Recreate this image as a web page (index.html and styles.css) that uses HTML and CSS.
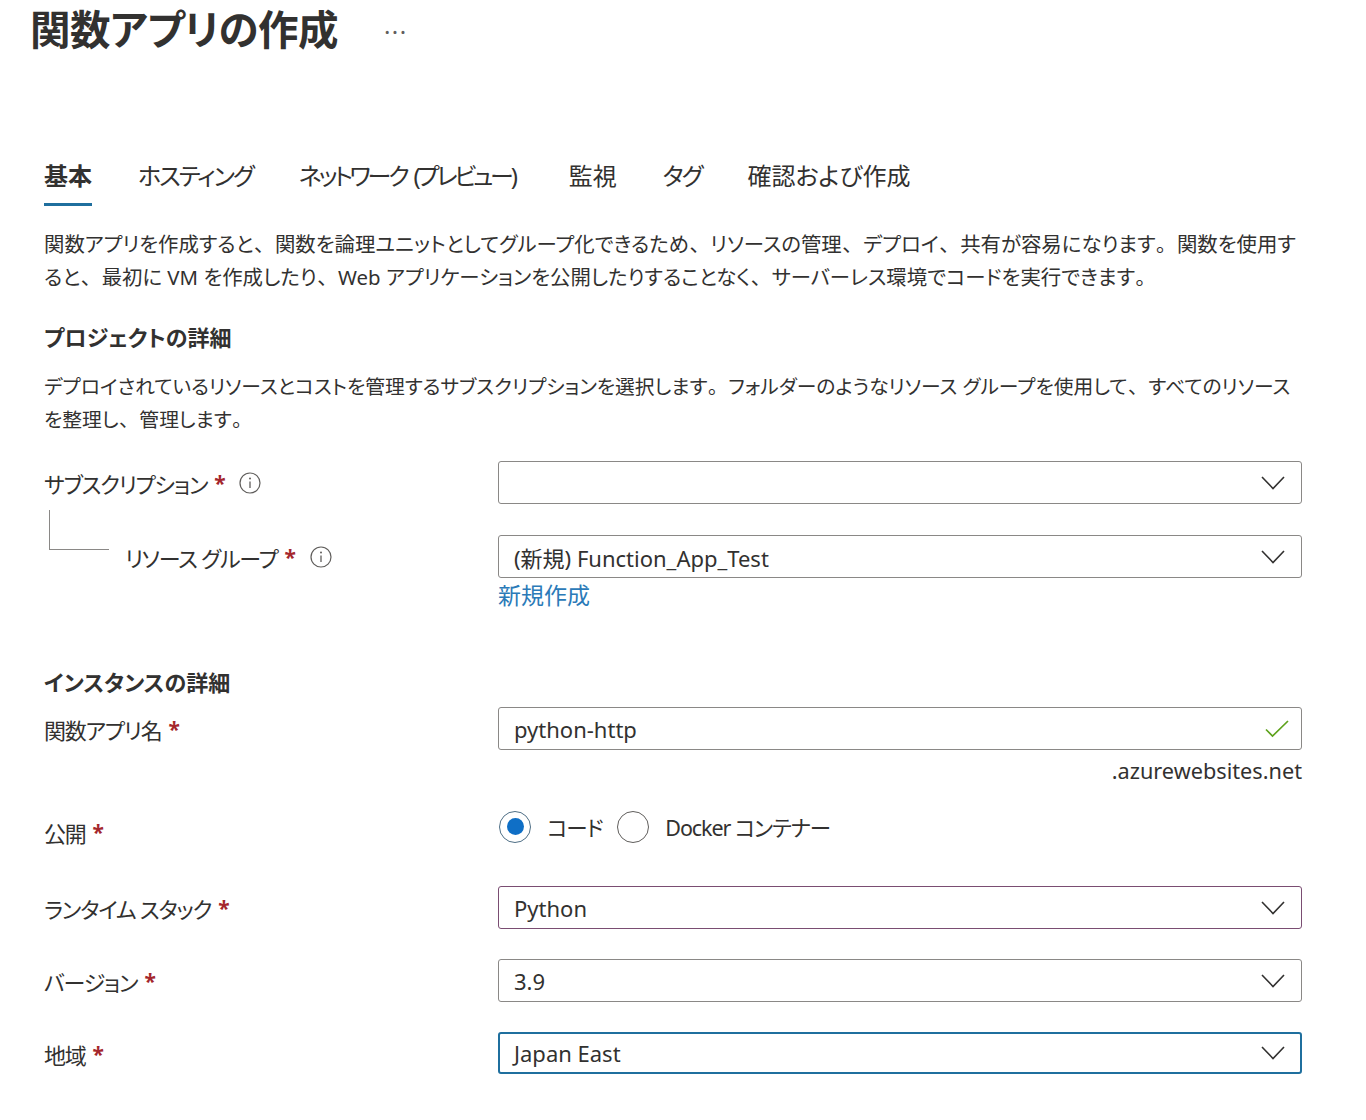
FILE: index.html
```html
<!DOCTYPE html>
<html lang="ja">
<head>
<meta charset="utf-8">
<title>関数アプリの作成</title>
<link rel="stylesheet" href="styles.css">
</head>
<body>
<header class="page-header">
  <h1 class="page-title">関数アプリの作成</h1>
  <span class="more">···</span>
</header>

<main class="content">
  <nav class="tabs">
    <span class="tab active">基本</span>
    <span class="tab tab-kana">ホスティング</span>
    <span class="tab tab-kana tab-long">ネットワーク (プレビュー)</span>
    <span class="tab tab-after-long">監視</span>
    <span class="tab tab-kana">タグ</span>
    <span class="tab">確認および作成</span>
  </nav>

  <p class="intro"><span class="seg">関数アプリを作成すると<span class="fw">、</span>関数を論理ユニットとしてグループ化できるため<span class="fw">、</span>リソースの管理<span class="fw">、</span>デプロイ<span class="fw">、</span>共有が容易になります<span class="fw">。</span>関数を使用す</span><span class="seg">ると<span class="fw">、</span>最初に VM を作成したり<span class="fw">、</span>Web アプリケーションを公開したりすることなく<span class="fw">、</span>サーバーレス環境でコードを実行できます<span class="fw">。</span></span></p>

  <h2 class="section-title">プロジェクトの詳細</h2>
  <p class="section-desc"><span class="seg">デプロイされているリソースとコストを管理するサブスクリプションを選択します<span class="fw">。</span>フォルダーのようなリソース グループを使用して<span class="fw">、</span>すべてのリソース</span><span class="seg">を整理し<span class="fw">、</span>管理します<span class="fw">。</span></span></p>

  <div class="row row-sub">
    <div class="label">サブスクリプション <span class="req">*</span>
      <span class="info"><svg viewBox="0 0 22 22" width="22" height="22"><circle cx="11" cy="11" r="10" fill="none" stroke="#605e5c" stroke-width="1.2"/><circle cx="11" cy="6.6" r="1" fill="#605e5c"/><path d="M11 9.5v6.5" stroke="#605e5c" stroke-width="1.3"/></svg></span>
    </div>
    <div class="control">
      <div class="select"><span class="value"></span><svg class="chev" viewBox="0 0 24 14" width="24" height="14"><path d="M1 1l11 11.5L23 1" fill="none" stroke="#323130" stroke-width="1.6"/></svg></div>
    </div>
  </div>

  <div class="row row-rg">
    <div class="label label-child"><span class="tree"></span>リソース グループ <span class="req">*</span>
      <span class="info"><svg viewBox="0 0 22 22" width="22" height="22"><circle cx="11" cy="11" r="10" fill="none" stroke="#605e5c" stroke-width="1.2"/><circle cx="11" cy="6.6" r="1" fill="#605e5c"/><path d="M11 9.5v6.5" stroke="#605e5c" stroke-width="1.3"/></svg></span>
    </div>
    <div class="control">
      <div class="select"><span class="value">(新規) Function_App_Test</span><svg class="chev" viewBox="0 0 24 14" width="24" height="14"><path d="M1 1l11 11.5L23 1" fill="none" stroke="#323130" stroke-width="1.6"/></svg></div>
      <a class="link">新規作成</a>
    </div>
  </div>

  <h2 class="section-title section-instance">インスタンスの詳細</h2>

  <div class="row row-name">
    <div class="label">関数アプリ名 <span class="req">*</span></div>
    <div class="control">
      <div class="select"><span class="value">python-http</span><svg class="check" viewBox="0 0 24 18" width="24" height="18"><path d="M1 9.5l6.5 6.5L23 1" fill="none" stroke="#5ea21c" stroke-width="1.7"/></svg></div>
      <div class="suffix">.azurewebsites.net</div>
    </div>
  </div>

  <div class="row row-publish">
    <div class="label label-low">公開 <span class="req">*</span></div>
    <div class="control radios">
      <span class="radio checked"><span class="dot"></span></span><span class="radio-text">コード</span>
      <span class="radio"></span><span class="radio-text">Docker コンテナー</span>
    </div>
  </div>

  <div class="row row-runtime">
    <div class="label">ランタイム スタック <span class="req">*</span></div>
    <div class="control">
      <div class="select select-hover"><span class="value">Python</span><svg class="chev" viewBox="0 0 24 14" width="24" height="14"><path d="M1 1l11 11.5L23 1" fill="none" stroke="#323130" stroke-width="1.6"/></svg></div>
    </div>
  </div>

  <div class="row row-gap">
    <div class="label">バージョン <span class="req">*</span></div>
    <div class="control">
      <div class="select"><span class="value">3.9</span><svg class="chev" viewBox="0 0 24 14" width="24" height="14"><path d="M1 1l11 11.5L23 1" fill="none" stroke="#323130" stroke-width="1.6"/></svg></div>
    </div>
  </div>

  <div class="row row-gap">
    <div class="label">地域 <span class="req">*</span></div>
    <div class="control">
      <div class="select select-focus"><span class="value">Japan East</span><svg class="chev" viewBox="0 0 24 14" width="24" height="14"><path d="M1 1l11 11.5L23 1" fill="none" stroke="#323130" stroke-width="1.6"/></svg></div>
    </div>
  </div>
</main>
</body>
</html>
```

FILE: styles.css
```css
html, body {
  margin: 0;
  padding: 0;
  background: #ffffff;
}

body {
  font-family: "Noto Sans", "Noto Sans CJK JP", sans-serif;
  font-feature-settings: "palt";
  color: #323130;
  width: 1366px;
}

.fw {
  font-feature-settings: normal;
  margin: 0 0.5px;
}

.page-header {
  display: flex;
  align-items: center;
  height: 60px;
  padding-left: 30px;
}

.page-title {
  margin: 0;
  font-size: 40.5px;
  font-weight: 700;
  line-height: 60px;
  letter-spacing: -0.5px;
  color: #323130;
}

.more {
  margin-left: 46px;
  font-size: 24px;
  color: #605e5c;
  letter-spacing: 1.5px;
  padding-top: 2px;
}

.content {
  padding-left: 44px;
  width: 1258px;
}

.tabs {
  display: flex;
  gap: 46px;
  margin-top: 100px;
}

.tab {
  font-size: 24px;
  line-height: 32px;
  padding-bottom: 11px;
  border-bottom: 3px solid transparent;
  color: #323130;
  white-space: nowrap;
}

.tab-kana {
  letter-spacing: -2px;
}

.tab-long {
  letter-spacing: -3.2px;
  word-spacing: 4px;
}

.tab-after-long {
  margin-left: 8px;
}

.tab.active {
  font-weight: 700;
  border-bottom-color: #1f6f9e;
}

.intro {
  margin: 22px 0 0;
  font-size: 20.4px;
  line-height: 33px;
}

.section-title {
  margin: 27px 0 0;
  font-size: 22px;
  font-weight: 700;
  line-height: 33px;
}

.section-desc {
  margin: 16px 0 0;
  font-size: 19.8px;
  line-height: 33px;
}

.row {
  display: grid;
  grid-template-columns: 454px 804px;
  align-items: start;
}

.row-sub { margin-top: 25px; }
.row-rg { margin-top: 31px; }
.row-name { margin-top: 8px; }
.row-publish { margin-top: 19px; }
.row-runtime { margin-top: 38px; }
.row-gap { margin-top: 30px; }

.label {
  display: flex;
  align-items: center;
  height: 43px;
  font-size: 22px;
  letter-spacing: -1.2px;
  white-space: nowrap;
}

.label-low { padding-top: 10px; height: 33px; }

.label-child {
  position: relative;
  padding-left: 81px;
}

.tree {
  position: absolute;
  left: 5px;
  top: -25px;
  width: 59px;
  height: 39px;
  border-left: 1px solid #8a8886;
  border-bottom: 1px solid #8a8886;
}

.req {
  color: #a4262c;
  margin-left: 7px;
  font-weight: 700;
  font-size: 21px;
}

.info {
  display: inline-flex;
  margin-left: 15px;
}

.select {
  box-sizing: border-box;
  height: 43px;
  border: 1px solid #8a8886;
  border-radius: 3px;
  display: flex;
  align-items: center;
  justify-content: space-between;
  padding: 0 16px 0 15px;
  font-size: 22px;
}

.select-hover { border-color: #7a4d72; }

.select-focus {
  border: 2px solid #1f6f9e;
  padding-left: 14px;
  padding-right: 15px;
  height: 42px;
}

.chev { display: block; }
.check { display: block; margin-right: -4px; }

.link {
  display: block;
  margin-top: 2px;
  font-size: 23px;
  line-height: 30px;
  color: #2b7ab8;
}

.section-instance { margin-top: 56px; }

.suffix {
  text-align: right;
  font-size: 21.7px;
  line-height: 30px;
  margin-top: 6px;
}

.radios {
  display: flex;
  align-items: center;
  height: 43px;
  font-size: 21.5px;
  letter-spacing: -1.1px;
}

.radio {
  box-sizing: border-box;
  width: 32px;
  height: 32px;
  border: 1px solid #605e5c;
  border-radius: 50%;
  display: flex;
  align-items: center;
  justify-content: center;
  margin-left: 1px;
}

.radio.checked { border-color: #4f6f86; }

.dot {
  width: 17px;
  height: 17px;
  border-radius: 50%;
  background: #0f6fc6;
}

.radio-text {
  margin-left: 16px;
  margin-right: 14px;
}
```
